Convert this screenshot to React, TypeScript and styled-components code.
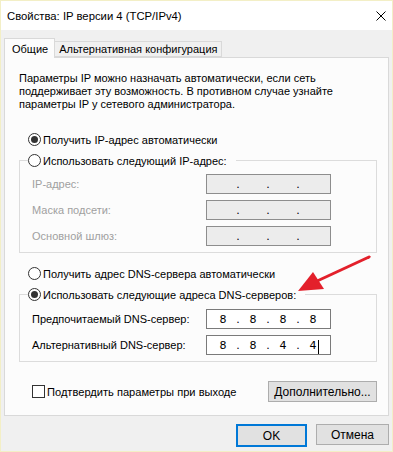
import React from 'react';
import styled, { createGlobalStyle } from 'styled-components';

const GlobalStyle = createGlobalStyle`
  html, body { margin: 0; padding: 0; background: #f0f0f0; }
  * { box-sizing: border-box; }
`;

const UI = `"Liberation Sans", Arial, sans-serif`;
const DLG = `"Liberation Sans", Arial, sans-serif`;

const Window = styled.div`
  position: relative;
  width: 393px;
  height: 452px;
  border: 1px solid #f3efc6;
  background: #f0f0f0;
  display: flex;
  flex-direction: column;
  font-family: ${DLG};
  color: #000;
`;

const TitleBar = styled.div`
  height: 29px;
  background: #ffffff;
  display: flex;
  align-items: center;
  justify-content: space-between;
  padding: 0 6px 0 6px;
  font-family: ${UI};
  font-size: 11.3px;
  color: #000;
`;

const CloseIcon = styled.svg`
  width: 10px;
  height: 10px;
`;

const Body = styled.div`
  padding: 8px 3px 0 3px;
  display: flex;
  flex-direction: column;
`;

const TabStrip = styled.div`
  display: flex;
  align-items: flex-end;
  height: 19px;
`;

const Tab = styled.div<{ $active?: boolean }>`
  position: relative;
  z-index: ${p => (p.$active ? 2 : 1)};
  height: ${p => (p.$active ? '20px' : '16px')};
  margin-bottom: ${p => (p.$active ? '-1px' : '0')};
  margin-left: ${p => (p.$active ? '0' : '-1px')};
  padding: ${p => (p.$active ? '0 6px 0 7px' : '0 4px 0 4px')};
  border: 1px solid #d9d9d9;
  border-bottom: ${p => (p.$active ? 'none' : '1px solid #d9d9d9')};
  background: ${p => (p.$active ? '#fcfcfc' : '#f0f0f0')};
  font-family: ${UI};
  font-size: 11px;
  display: flex;
  align-items: center;
  white-space: nowrap;
`;

const Panel = styled.div`
  position: relative;
  height: 359px;
  border: 1px solid #d9d9d9;
  background: #fcfcfc;
  padding: 14px 11px 0 14px;
  display: flex;
  flex-direction: column;
`;

const Intro = styled.p`
  margin: 0;
  font-size: 11px;
  line-height: 13px;
  white-space: nowrap;
`;

const RadioRow = styled.label<{ $mt?: number; $inLegend?: boolean }>`
  display: flex;
  align-items: center;
  height: 13px;
  margin-top: ${p => p.$mt ?? 0}px;
  margin-left: ${p => (p.$inLegend ? 0 : 9)}px;
  font-size: 11px;
  white-space: nowrap;
`;

const RadioCircle = styled.span<{ $checked?: boolean }>`
  width: 13px;
  height: 13px;
  border-radius: 50%;
  border: 1px solid #333333;
  background: #ffffff;
  display: flex;
  align-items: center;
  justify-content: center;
  margin-right: 2px;
  flex: 0 0 auto;
  &::after {
    content: '';
    display: ${p => (p.$checked ? 'block' : 'none')};
    width: 7px;
    height: 7px;
    border-radius: 50%;
    background: #333333;
  }
`;

const Group = styled.fieldset<{ $mt: number; $pt: number; $pb: number }>`
  margin: ${p => p.$mt}px 0 0 0;
  padding: ${p => p.$pt}px 0 ${p => p.$pb}px 12px;
  border: 1px solid #dcdcdc;
  display: flex;
  flex-direction: column;
  gap: 6px;
  min-width: 0;
`;

const Legend = styled.legend`
  padding: 0 9px 0 0;
  margin-left: -4px;
  height: 13px;
`;

const FieldRow = styled.div`
  display: flex;
  align-items: center;
  height: 20px;
`;

const FieldLabel = styled.span<{ $disabled?: boolean }>`
  width: 174px;
  font-size: 11px;
  color: ${p => (p.$disabled ? '#a0a0a0' : '#000')};
  white-space: nowrap;
`;

const IpBox = styled.div<{ $disabled?: boolean }>`
  width: 125px;
  height: 20px;
  border: 1px solid ${p => (p.$disabled ? '#8d8d8d' : '#7a7a7a')};
  background: ${p => (p.$disabled ? '#ececec' : '#ffffff')};
  padding: 0 5px 0 4px;
  display: flex;
  align-items: center;
  font-family: "DejaVu Sans", sans-serif;
  font-size: 11px;
`;

const Octet = styled.span`
  width: 24px;
  text-align: center;
  position: relative;
`;

const Dot = styled.span`
  width: 6px;
  text-align: center;
`;

const Caret = styled.span`
  position: absolute;
  top: 1px;
  right: 6px;
  width: 1px;
  height: 14px;
  background: #000;
`;

const BottomRow = styled.div`
  display: flex;
  align-items: center;
  justify-content: space-between;
  margin-top: 19px;
  padding-left: 13px;
`;

const CheckLabel = styled.label`
  display: flex;
  align-items: center;
  font-family: ${UI};
  font-size: 11.1px;
  white-space: nowrap;
`;

const CheckBox = styled.span`
  width: 13px;
  height: 13px;
  border: 1px solid #333333;
  background: #ffffff;
  margin-right: 2px;
`;

const Button = styled.button<{ $primary?: boolean; $w: number }>`
  width: ${p => p.$w}px;
  height: ${p => (p.$primary ? 23 : 21)}px;
  border: ${p => (p.$primary ? '2px solid #0078d7' : '1px solid #adadad')};
  background: #e1e1e1;
  font-family: ${UI};
  font-size: 12px;
  color: #000;
  padding: 0;
  display: flex;
  align-items: center;
  justify-content: center;
`;

const DialogButtons = styled.div`
  display: flex;
  justify-content: flex-end;
  gap: 9px;
  margin-top: 8px;
`;

const ArrowSvg = styled.svg`
  position: absolute;
  left: 0;
  top: 0;
  pointer-events: none;
`;

const IpField = ({ values, disabled, caret }: { values: string[]; disabled?: boolean; caret?: boolean }) => (
  <IpBox $disabled={disabled}>
    {values.map((v, i) => (
      <React.Fragment key={i}>
        <Octet>
          {v}
          {caret && i === 3 ? <Caret /> : null}
        </Octet>
        {i < 3 ? <Dot>.</Dot> : null}
      </React.Fragment>
    ))}
  </IpBox>
);

export default function App() {
  return (
    <>
      <GlobalStyle />
      <Window>
        <TitleBar>
          <span>Свойства: IP версии 4 (TCP/IPv4)</span>
          <CloseIcon viewBox="0 0 10 10">
            <path d="M0.5 0.5 L9.5 9.5 M9.5 0.5 L0.5 9.5" stroke="#000" strokeWidth="1" fill="none" />
          </CloseIcon>
        </TitleBar>
        <Body>
          <TabStrip>
            <Tab $active>Общие</Tab>
            <Tab>Альтернативная конфигурация</Tab>
          </TabStrip>
          <Panel>
            <Intro>
              Параметры IP можно назначать автоматически, если сеть
              <br />
              поддерживает эту возможность. В противном случае узнайте
              <br />
              параметры IP у сетевого администратора.
            </Intro>
            <RadioRow $mt={22}>
              <RadioCircle $checked />
              Получить IP-адрес автоматически
            </RadioRow>
            <Group $mt={8} $pt={7} $pb={6}>
              <Legend>
                <RadioRow as="span" $inLegend>
                  <RadioCircle />
                  Использовать следующий IP-адрес:
                </RadioRow>
              </Legend>
              <FieldRow>
                <FieldLabel $disabled>IP-адрес:</FieldLabel>
                <IpField disabled values={['', '', '', '']} />
              </FieldRow>
              <FieldRow>
                <FieldLabel $disabled>Маска подсети:</FieldLabel>
                <IpField disabled values={['', '', '', '']} />
              </FieldRow>
              <FieldRow>
                <FieldLabel $disabled>Основной шлюз:</FieldLabel>
                <IpField disabled values={['', '', '', '']} />
              </FieldRow>
            </Group>
            <RadioRow $mt={14}>
              <RadioCircle />
              Получить адрес DNS-сервера автоматически
            </RadioRow>
            <Group $mt={8} $pt={8} $pb={6}>
              <Legend>
                <RadioRow as="span" $inLegend>
                  <RadioCircle $checked />
                  Использовать следующие адреса DNS-серверов:
                </RadioRow>
              </Legend>
              <FieldRow>
                <FieldLabel>Предпочитаемый DNS-сервер:</FieldLabel>
                <IpField values={['8', '8', '8', '8']} />
              </FieldRow>
              <FieldRow>
                <FieldLabel>Альтернативный DNS-сервер:</FieldLabel>
                <IpField values={['8', '8', '4', '4']} caret />
              </FieldRow>
            </Group>
            <BottomRow>
              <CheckLabel>
                <CheckBox />
                Подтвердить параметры при выходе
              </CheckLabel>
              <Button $w={109}>Дополнительно...</Button>
            </BottomRow>
          </Panel>
          <DialogButtons>
            <Button $primary $w={71}>OK</Button>
            <Button $w={73}>Отмена</Button>
          </DialogButtons>
        </Body>
        <ArrowSvg width="393" height="452" viewBox="0 0 393 452">
          <line x1="368" y1="256" x2="314" y2="281" stroke="#e3202b" strokeWidth="3" strokeLinecap="round" />
          <polygon points="297,290 312,271 323,288" fill="#e3202b" />
        </ArrowSvg>
      </Window>
    </>
  );
}
